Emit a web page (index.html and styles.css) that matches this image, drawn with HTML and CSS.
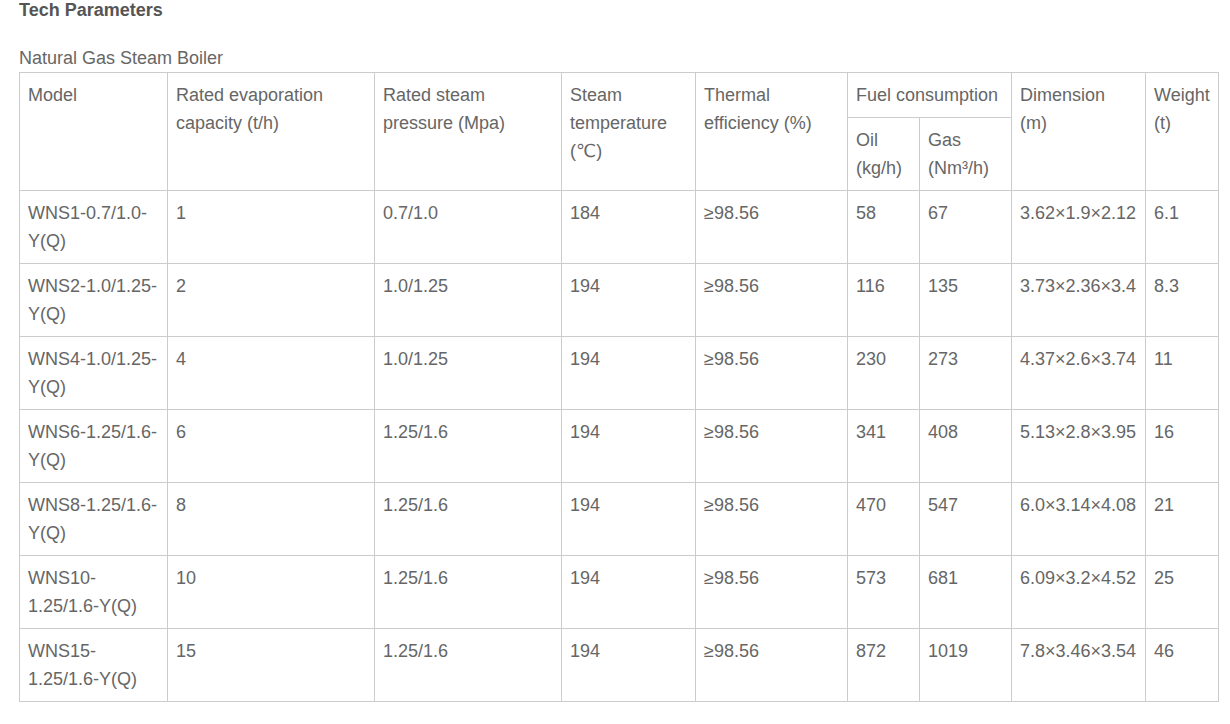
FILE: index.html
```html
<!DOCTYPE html>
<html>
<head>
<meta charset="utf-8">
<link rel="stylesheet" href="styles.css">
</head>
<body>
<div class="page">
  <div class="title">Tech Parameters</div>
  <div class="subtitle">Natural Gas Steam Boiler</div>
  <table class="params">
    <colgroup>
      <col class="c1"><col class="c2"><col class="c3"><col class="c4"><col class="c5"><col class="c6"><col class="c7"><col class="c8"><col class="c9">
    </colgroup>
    <thead>
      <tr>
        <td rowspan="2">Model</td>
        <td rowspan="2">Rated evaporation capacity (t/h)</td>
        <td rowspan="2">Rated steam pressure (Mpa)</td>
        <td rowspan="2">Steam temperature (℃)</td>
        <td rowspan="2">Thermal efficiency (%)</td>
        <td colspan="2" class="nowrap">Fuel consumption</td>
        <td rowspan="2">Dimension (m)</td>
        <td rowspan="2">Weight (t)</td>
      </tr>
      <tr>
        <td>Oil (kg/h)</td>
        <td>Gas (Nm³/h)</td>
      </tr>
    </thead>
    <tbody>
      <tr><td>WNS1-0.7/1.0-Y(Q)</td><td>1</td><td>0.7/1.0</td><td>184</td><td>≥98.56</td><td>58</td><td>67</td><td>3.62×1.9×2.12</td><td>6.1</td></tr>
      <tr><td>WNS2-1.0/1.25-Y(Q)</td><td>2</td><td>1.0/1.25</td><td>194</td><td>≥98.56</td><td>116</td><td>135</td><td>3.73×2.36×3.4</td><td>8.3</td></tr>
      <tr><td>WNS4-1.0/1.25-Y(Q)</td><td>4</td><td>1.0/1.25</td><td>194</td><td>≥98.56</td><td>230</td><td>273</td><td>4.37×2.6×3.74</td><td>11</td></tr>
      <tr><td>WNS6-1.25/1.6-Y(Q)</td><td>6</td><td>1.25/1.6</td><td>194</td><td>≥98.56</td><td>341</td><td>408</td><td>5.13×2.8×3.95</td><td>16</td></tr>
      <tr><td>WNS8-1.25/1.6-Y(Q)</td><td>8</td><td>1.25/1.6</td><td>194</td><td>≥98.56</td><td>470</td><td>547</td><td>6.0×3.14×4.08</td><td>21</td></tr>
      <tr><td>WNS10-1.25/1.6-Y(Q)</td><td>10</td><td>1.25/1.6</td><td>194</td><td>≥98.56</td><td>573</td><td>681</td><td>6.09×3.2×4.52</td><td>25</td></tr>
      <tr><td>WNS15-1.25/1.6-Y(Q)</td><td>15</td><td>1.25/1.6</td><td>194</td><td>≥98.56</td><td>872</td><td>1019</td><td>7.8×3.46×3.54</td><td>46</td></tr>
    </tbody>
  </table>
</div>
</body>
</html>
```
FILE: styles.css
```css
html, body {
  margin: 0;
  padding: 0;
  background: #fff;
}
.page {
  padding: 0 19px;
  font-family: "Liberation Sans", Arial, "DejaVu Sans", sans-serif;
  font-size: 18px;
  color: #666;
}
.title {
  font-weight: bold;
  color: #555;
  line-height: 20px;
}
.subtitle {
  margin-top: 26px;
  line-height: 24px;
}
.params {
  margin-top: 2px;
  width: 1199px;
  table-layout: fixed;
  border-collapse: collapse;
}
.params td {
  border: 1px solid #ccc;
  padding: 8px 8px;
  line-height: 28px;
  vertical-align: top;
  text-align: left;
  word-wrap: break-word;
}
.params .nowrap { white-space: nowrap; }
.c1 { width: 148px; }
.c2 { width: 207px; }
.c3 { width: 187px; }
.c4 { width: 134px; }
.c5 { width: 152px; }
.c6 { width: 72px; }
.c7 { width: 92px; }
.c8 { width: 134px; }
.c9 { width: 73px; }
```
